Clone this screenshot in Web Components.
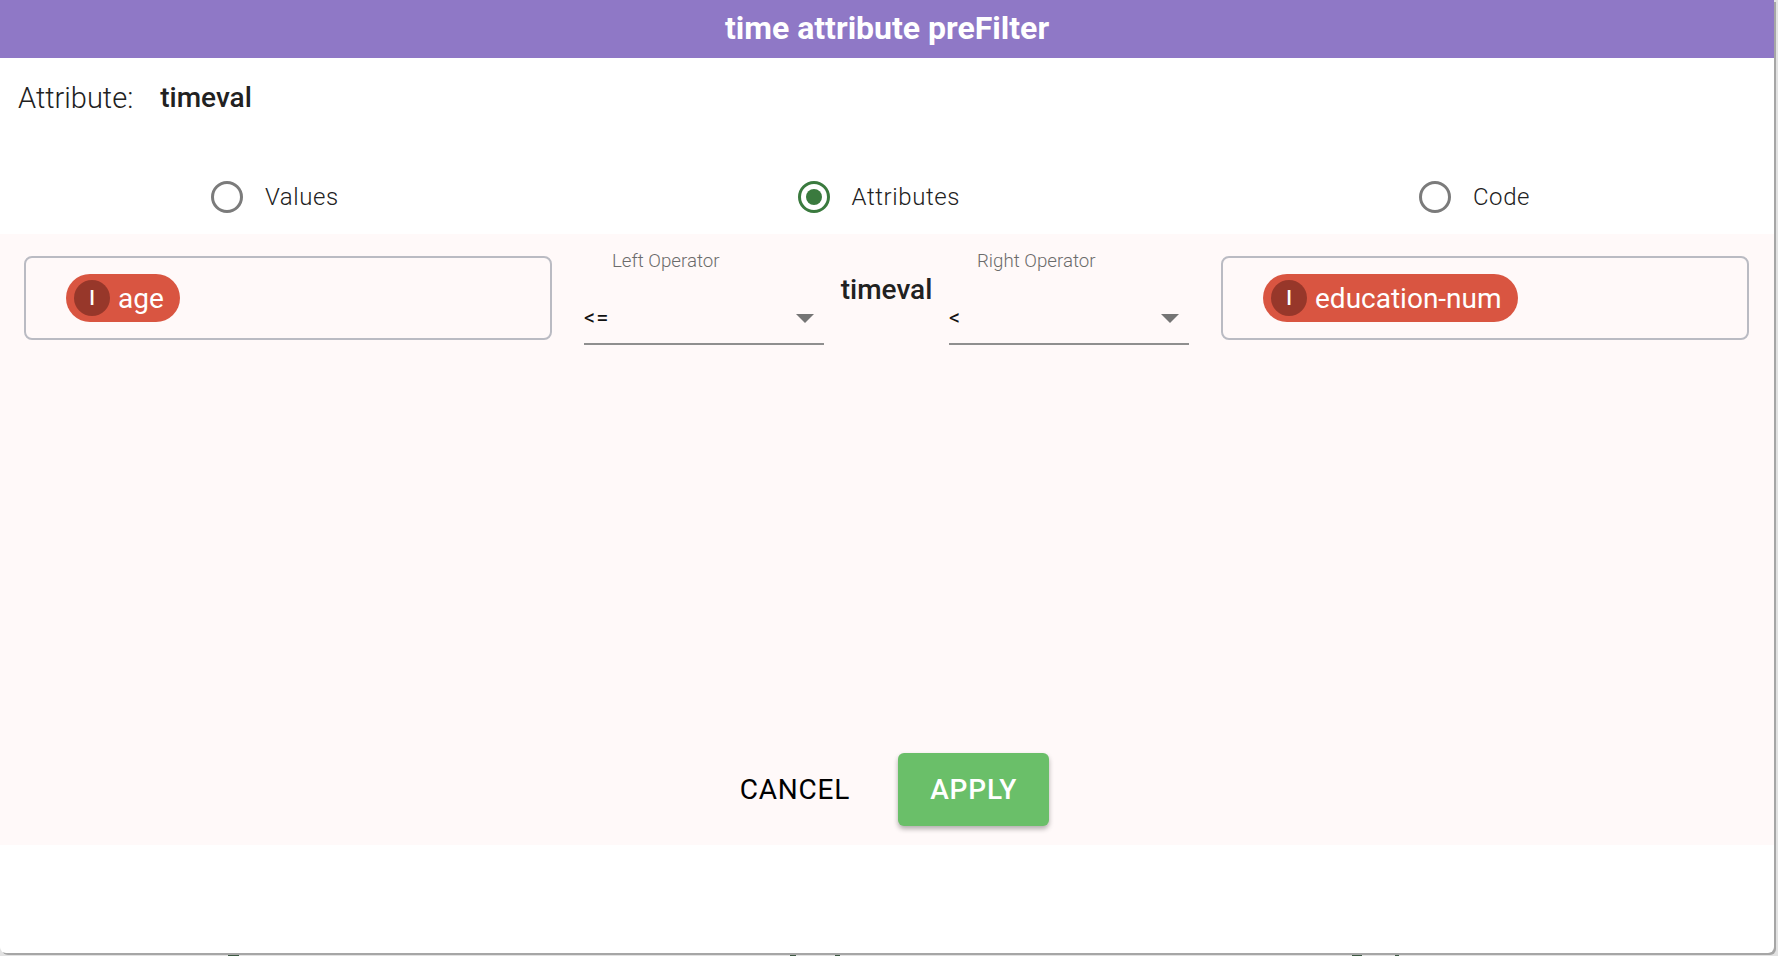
<!DOCTYPE html>
<html>
<head>
<meta charset="utf-8">
<style>
  html, body { margin: 0; height: 100%; background: #e2e2e2; overflow: hidden; }
  body { font-family: Roboto, "Liberation Sans", sans-serif; color: #212121; }
</style>
</head>
<body>
<prefilter-dialog heading="time attribute preFilter" attribute="timeval">
  <radio-option slot="modes" label="Values"></radio-option>
  <radio-option slot="modes" label="Attributes" checked></radio-option>
  <radio-option slot="modes" label="Code"></radio-option>

  <drop-box slot="row"><attr-chip label="age"></attr-chip></drop-box>
  <op-select slot="row" label="Left Operator" value="&lt;="></op-select>
  <span slot="row" class="name">timeval</span>
  <op-select slot="row" label="Right Operator" value="&lt;"></op-select>
  <drop-box slot="row"><attr-chip label="education-num"></attr-chip></drop-box>

  <flat-button slot="actions">CANCEL</flat-button>
  <flat-button slot="actions" primary>APPLY</flat-button>
</prefilter-dialog>
<page-behind></page-behind>

<script>
class PrefilterDialog extends HTMLElement {
  constructor() {
    super();
    this.attachShadow({ mode: 'open' });
    this.shadowRoot.innerHTML = `
    <style>
      :host {
        display: flex;
        flex-direction: column;
        box-sizing: border-box;
        width: 1774px;
        height: 953px;
        background: #fff;
        border-radius: 0 0 6px 6px;
        box-shadow: 2px 2px 0 #a6a6a6;
      }
      header {
        height: 58px;
        flex: none;
        background: #8f78c6;
        color: #fff;
        font-size: 32px;
        font-weight: 700;
        display: flex;
        align-items: center;
        justify-content: center;
        padding-bottom: 2px;
        box-sizing: border-box;
      }
      .attr {
        height: 78px;
        flex: none;
        box-sizing: border-box;
        padding: 1px 0 0 18px;
        font-size: 29px;
        font-weight: 300;
        display: flex;
        align-items: center;
        gap: 27px;
      }
      .attr b { font-size: 28px; font-weight: 500; }
      .modes {
        height: 98px;
        flex: none;
        display: flex;
        justify-content: space-around;
        align-items: center;
        box-sizing: border-box;
        padding: 24px 0 0 0;
        margin-right: -4px;
      }
      .panel {
        height: 611px;
        flex: none;
        box-sizing: border-box;
        background: #fff9f9;
        display: flex;
        flex-direction: column;
        padding: 22px 25px 19px 24px;
      }
      .row { display: flex; }
      .actions {
        margin-top: auto;
        display: flex;
        justify-content: center;
        gap: 32px;
      }
      ::slotted(.name) {
        width: 125px;
        text-align: center;
        font-size: 28px;
        font-weight: 500;
        line-height: 33px;
        padding-top: 17px;
      }
    </style>
    <header>${this.getAttribute('heading')}</header>
    <div class="attr"><span>Attribute:</span><b>${this.getAttribute('attribute')}</b></div>
    <div class="modes"><slot name="modes"></slot></div>
    <div class="panel">
      <div class="row"><slot name="row"></slot></div>
      <div class="actions"><slot name="actions"></slot></div>
    </div>
    `;
  }
}
customElements.define('prefilter-dialog', PrefilterDialog);

class RadioOption extends HTMLElement {
  constructor() {
    super();
    this.attachShadow({ mode: 'open' });
    const on = this.hasAttribute('checked');
    this.shadowRoot.innerHTML = `
    <style>
      :host {
        display: flex;
        align-items: center;
        gap: 22px;
        padding-right: 37px;
        font-size: 24px;
        font-weight: 300;
        letter-spacing: .6px;
      }
      svg { display: block; }
    </style>
    <svg width="32" height="32" viewBox="0 0 32 32">
      <circle cx="16" cy="16" r="14.5" fill="none" stroke-width="3" stroke="${on ? '#3a7a3e' : '#7b7b7b'}"/>
      ${on ? '<circle cx="16" cy="16" r="8" fill="#3a7a3e"/>' : ''}
    </svg>
    <span>${this.getAttribute('label')}</span>
    `;
  }
}
customElements.define('radio-option', RadioOption);

class DropBox extends HTMLElement {
  constructor() {
    super();
    this.attachShadow({ mode: 'open' });
    this.shadowRoot.innerHTML = `
    <style>
      :host {
        display: flex;
        align-items: center;
        box-sizing: border-box;
        width: 528px;
        height: 84px;
        padding-left: 40px;
        border: 2px solid #babbc3;
        border-radius: 8px;
      }
    </style>
    <slot></slot>
    `;
  }
}
customElements.define('drop-box', DropBox);

class AttrChip extends HTMLElement {
  constructor() {
    super();
    this.attachShadow({ mode: 'open' });
    this.shadowRoot.innerHTML = `
    <style>
      :host {
        display: inline-flex;
        align-items: center;
        height: 48px;
        border-radius: 24px;
        background: #d95541;
        color: #fff;
        padding: 0 16px 0 8px;
        font-size: 28px;
        gap: 8px;
      }
      i {
        width: 36px;
        height: 36px;
        border-radius: 50%;
        background: #97372a;
        font-style: normal;
        font-size: 20px;
        font-weight: 500;
        display: flex;
        align-items: center;
        justify-content: center;
      }
    </style>
    <i>I</i><span>${this.getAttribute('label')}</span>
    `;
  }
}
customElements.define('attr-chip', AttrChip);

class OpSelect extends HTMLElement {
  constructor() {
    super();
    this.attachShadow({ mode: 'open' });
    this.shadowRoot.innerHTML = `
    <style>
      :host {
        display: block;
        box-sizing: border-box;
        width: 240px;
        height: 89px;
        border-bottom: 2px solid #8f8f8f;
      }
      label {
        display: block;
        padding: 0 0 0 28px;
        font-size: 18.7px;
        font-weight: 300;
        color: #6b6b6b;
        line-height: 22px;
        margin-top: -6px;
      }
      .val {
        display: flex;
        justify-content: space-between;
        align-items: center;
        margin-top: 35px;
        font-size: 22px;
        letter-spacing: 1px;
        line-height: 22px;
        color: #111;
        padding-right: 10px;
      }
      .arrow {
        width: 0; height: 0;
        border-left: 9px solid transparent;
        border-right: 9px solid transparent;
        border-top: 9px solid #757575;
      }
    </style>
    <label>${this.getAttribute('label')}</label>
    <div class="val"><span>${this.getAttribute('value').replace('<', '&lt;')}</span><div class="arrow"></div></div>
    `;
  }
  connectedCallback() {
    // the two selects sit 32px off the drop boxes
    if (this.previousElementSibling.tagName === 'DROP-BOX') this.style.marginLeft = '32px';
    else this.style.marginRight = '32px';
  }
}
customElements.define('op-select', OpSelect);

class FlatButton extends HTMLElement {
  constructor() {
    super();
    this.attachShadow({ mode: 'open' });
    this.shadowRoot.innerHTML = `
    <style>
      :host {
        display: flex;
        align-items: center;
        justify-content: center;
        box-sizing: border-box;
        height: 73px;
        padding: 0 16px;
        font-size: 28px;
        font-weight: 450;
        letter-spacing: .8px;
        color: #000;
        border-radius: 6px;
      }
      :host([primary]) {
        background: #6abf69;
        color: #fff;
        font-weight: 500;
        letter-spacing: .8px;
        padding: 0 32px;
        box-shadow: 0 3px 5px rgba(0,0,0,.3);
      }
    </style>
    <slot></slot>
    `;
  }
}
customElements.define('flat-button', FlatButton);

// tops of the page's text, just visible under the dialog
class PageBehind extends HTMLElement {
  constructor() {
    super();
    this.attachShadow({ mode: 'open' });
    const marks = [[228, 11], [790, 6], [835, 5], [1352, 10], [1395, 4]];
    this.shadowRoot.innerHTML = `
    <style>
      :host { display: block; }
      i { position: absolute; top: 955px; height: 1px; background: #3e5a44; }
    </style>
    ${marks.map(([x, w]) => `<i style="left:${x}px;width:${w}px"></i>`).join('')}
    `;
  }
}
customElements.define('page-behind', PageBehind);
</script>
</body>
</html>
